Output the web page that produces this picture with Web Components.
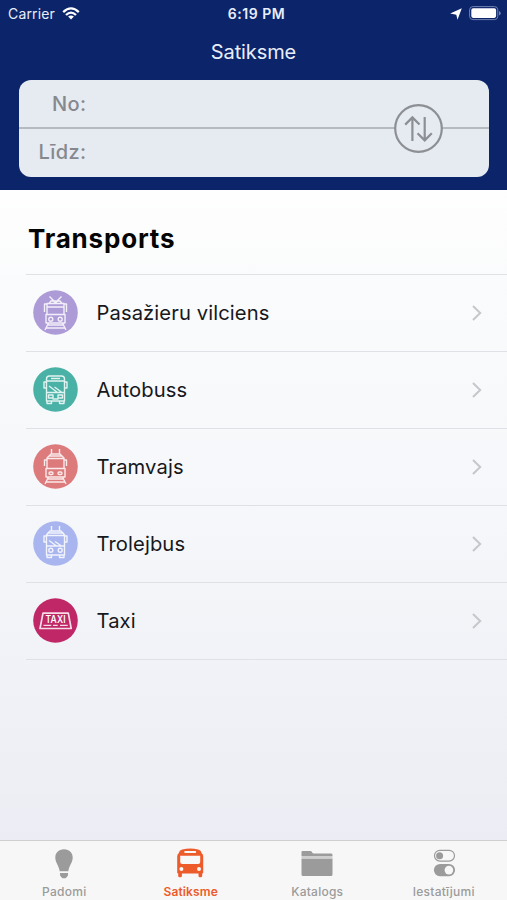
<!DOCTYPE html>
<html lang="lv">
<head>
<meta charset="utf-8">
<title>Satiksme</title>
<style>
html,body{margin:0;height:100%;overflow:hidden}
body{font-family:Inter,"Liberation Sans",sans-serif}
</style>
</head>
<body>
<transit-app></transit-app>
<script>
const define = (name, html) => {
  const t = document.createElement('template');
  t.innerHTML = html;
  customElements.define(name, class extends HTMLElement {
    constructor() {
      super();
      this.attachShadow({mode: 'open'}).append(t.content.cloneNode(true));
    }
  });
};

define('status-bar', `
<style>
:host{display:grid;grid-template-columns:1fr auto 1fr;align-items:center;height:27px;padding:0 6px 0 8px;color:#e8edfb;font-size:14px;line-height:27px;box-sizing:border-box}
div{display:flex;align-items:center}
.l{gap:7px}.r{justify-content:flex-end;gap:7px}
.c{letter-spacing:.15px}
.t{font-weight:600;font-size:14px;letter-spacing:.5px;padding-left:4px}
svg{display:block}
</style>
<div class="l"><span class="c">Carrier</span>
<svg width="18" height="13" viewBox="0 0 18 13" fill="none" stroke="#fff" stroke-width="2.3"><path d="M1.2 5.1Q9-2.3 16.8 5.1M4 8Q9 3.3 14 8"/><path d="M6.1 9.6Q9 7.2 11.9 9.6L9 12.6Z" fill="#fff" stroke="none"/></svg></div>
<span class="t">6:19 PM</span>
<div class="r"><svg width="12" height="12" viewBox="0 0 12 12" fill="#fff"><path d="M11.8.2L7.5 11.8 6.3 6.7.2 5.4Z"/></svg>
<svg width="32" height="15" viewBox="0 0 32 15"><rect x=".6" y=".6" width="28.2" height="13" rx="3.3" fill="none" stroke="#7181ae"/><rect x="2.3" y="2.3" width="24.8" height="9.6" rx="1.8" fill="#fff"/><path d="M30.2 5v4.5q1.4-.7 1.4-2.2T30.2 5" fill="#8c99bf"/></svg></div>`);

define('route-field', `
<style>
:host{display:flex;align-items:center;flex:1;box-sizing:border-box;padding:1px 0 0 19px;color:#85888d;font-size:20px;font-weight:500;letter-spacing:.4px}
:host(:last-of-type){padding:0 0 2px 19px}
span{width:48.5px;display:flex;justify-content:flex-end}
</style><span><slot></slot></span>`);

define('route-panel', `
<style>
:host{display:flex;flex-direction:column;position:relative;height:97px;background:#e6eaf1;border-radius:12px;overflow:hidden}
.line{height:1.5px;background:#b6b9be}
svg{position:absolute;left:374px;top:23px}
</style>
<route-field>No:</route-field><div class="line"></div><route-field>Līdz:</route-field>
<svg width="51" height="51" viewBox="0 0 51 51" fill="none" stroke="#8c8f94" stroke-width="2.2"><circle cx="25.5" cy="25.5" r="23.3" fill="#e6eaf1"/><path d="M19.4 38V15M12.2 21.6L19.4 14.4L26.5 21.6M31.7 14V37M24.5 30.3L31.7 37.4L38.8 30.3"/></svg>`);

define('app-header', `
<style>
:host{display:block;height:190px;background:#0c256a}
h1{margin:0;height:53px;font-weight:400;font-size:20px;line-height:51px;letter-spacing:-.1px;text-align:center;color:#e9eefb}
route-panel{margin:0 18px 0 19px}
</style>
<status-bar></status-bar><h1><slot></slot></h1><route-panel></route-panel>`);

const vehicle = {
  train: '<path d="M19 9.5L22.5 13L26 9.5M16.5 6.5L21 11M28.5 6.5L24 11M16 13.5L18 11H27L29 13.5M14 13.5H31V24.5H14ZM14 17H31M14 14H11.5V22M31 14H33.5V22M14 24.5H13V33H32V24.5H31M15.5 33L12 40M29.5 33L33 40M14.8 35H30.2M13.5 38H31.5"/><circle cx="17.8" cy="29.3" r="2"/><circle cx="27.2" cy="29.3" r="2"/>',
  bus: '<path d="M13.5 12Q13.5 9 16.5 9H28.5Q31.5 9 31.5 12V34H13.5ZM13.5 14H31.5M18 11.5H27M13.5 15H11V21H13.5M31.5 15H34V21H31.5M13.5 25.5H31.5M16 19L24.5 25.5M21.5 20L29 25.5M14 34V36.5H18.5V34M26.5 34V36.5H31V34M19.5 32H25.5"/><path d="M15.5 28H20V31H15.5ZM25 28H29.5V31H25Z"/>',
  tram: '<path d="M18.5 5V10M26.5 5V10M16 12L18 10H27L29 12M14 14L16 12H29L31 14V24.5H14ZM14 14.5H31M14 16H11.5V22M31 16H33.5V22M14 24.5H13V33H32V24.5H31M15.5 33L12 40M29.5 33L33 40M14.8 35H30.2M13.5 38H31.5"/><rect x="16" y="28" width="4" height="2.5" rx="1.2"/><rect x="25" y="28" width="4" height="2.5" rx="1.2"/>',
  trolley: '<path d="M18.5 5V10M26.5 5V10M15 12L17 10H28L30 12M13.5 14L15 12H30L31.5 14V34H13.5ZM13.5 14.5H31.5M13.5 15H11V21H13.5M31.5 15H34V21H31.5M13.5 25H31.5M16 19.5L23.5 25M22 20.5L28.5 25M14 34V36.5H18.5V34M26.5 34V36.5H31V34"/><circle cx="17.8" cy="29.2" r="2"/><circle cx="27.2" cy="29.2" r="2"/>',
  taxi: '<path stroke-width="1.7" d="M10 15.2H35.3L38.2 30.5H7Z"/><path stroke-width="1.4" d="M10.5 27.4H18.3M20 27.4H24.7M27 27.4H34.7"/><text x="22.6" y="25" text-anchor="middle" textLength="20" lengthAdjust="spacingAndGlyphs" font-family="Inter" font-size="10" font-weight="600" fill="#fff" stroke="none">TAXI</text>'
};

customElements.define('vehicle-icon', class extends HTMLElement {
  connectedCallback() {
    const kind = this.getAttribute('kind');
    this.attachShadow({mode: 'open'}).innerHTML = `
<style>:host{display:block;width:45px;height:45px;margin-top:-1px}svg{display:block}</style>
<svg width="45" height="45" viewBox="0 0 45 45"><circle cx="22.5" cy="22.5" r="22.3" fill="${this.getAttribute('tint')}"/>
<g fill="none" stroke="#fff" stroke-opacity=".84" stroke-width="1.4" stroke-linejoin="round">${vehicle[kind]}</g></svg>`;
  }
});

define('transport-row', `
<style>
:host{display:flex;align-items:center;height:77px;box-sizing:border-box;border-bottom:1px solid #dfe1e6;padding:0 24px 0 7px;font-size:20.2px;color:#17181b;letter-spacing:.1px}
.label{flex:1;padding:0 0 0 18.5px;line-height:30px}
</style>
<slot name="icon"></slot><span class="label"><slot></slot></span>
<svg width="12" height="18" viewBox="0 0 12 18" fill="none" stroke="#c6c7cb" stroke-width="2"><path d="M2 2L9.2 9L2 16"/></svg>`);

define('transport-list', `
<style>
:host{display:block;flex:1;background:linear-gradient(#fefefe 0,#fafbfc 15%,#f6f7fa 50%,#ecedf4 100%)}
h2{margin:0;padding-left:28px;height:84px;line-height:98px;font-size:26px;font-weight:700;letter-spacing:.8px;color:#050505;box-sizing:border-box}
.rows{margin-left:26px;border-top:1px solid #dfe1e6}
</style>
<h2>Transports</h2><div class="rows"><slot></slot></div>`);

const tabs = {
  bulb: '<path d="M20 4.2C14.4 4.2 11.3 8 11.3 12.5C11.3 17.5 14.7 20 15.7 26.2H24.3C25.3 20 28.7 17.5 28.7 12.5C28.7 8 25.6 4.2 20 4.2ZM16 28H24V30.2Q23 32 21.5 33.3H18.5Q17 32 16 30.2Z"/>',
  bus: '<path transform="translate(-.8 0)" fill-rule="evenodd" d="M12 4.5Q20 2.5 28 4.5Q31 5.3 31.5 8.3Q33 9 33 11.5V27.5Q33 28.5 32 28.5V31Q32 32.2 30.5 32.2H29.7Q28.3 32.2 28.3 31V28.5H11.7V31Q11.7 32.2 10.3 32.2H9.5Q8 32.2 8 31V28.5Q7 28.5 7 27.5V11.5Q7 9 8.5 8.3Q9 5.3 12 4.5ZM15 6Q14 6 14 7T15 8H25Q26 8 26 7T25 6ZM10 10.8V17Q10 19 12 19H28Q30 19 30 17V10.8ZM11.2 22A2 2 0 1 0 11.2 26A2 2 0 1 0 11.2 22ZM28.8 22A2 2 0 1 0 28.8 26A2 2 0 1 0 28.8 22Z"/>',
  folder: '<path d="M4.5 9V7Q4.5 6 5.5 6H13.5Q14.5 6 15 7.2Q15.6 8.6 17 8.6H34Q35.5 8.6 35.5 10V11H4.5ZM4.5 13.4H35.5V29.5Q35.5 31 34 31H6Q4.5 31 4.5 29.5Z"/><path fill="#cecece" d="M4.5 11H35.5V13.4H4.5Z"/>',
  toggles: '<g transform="translate(.6 0)"><rect x="9.9" y="5.3" width="20" height="10.8" rx="5.4" fill="none" stroke="currentColor" stroke-width="1.2"/><circle cx="15" cy="10.7" r="3.5"/><rect x="9.3" y="19" width="21.2" height="12.2" rx="6.1"/><circle cx="24.3" cy="25.1" r="4.3" fill="#f7f7f7"/></g>'
};

customElements.define('tab-item', class extends HTMLElement {
  connectedCallback() {
    this.attachShadow({mode: 'open'}).innerHTML = `
<style>
:host{display:flex;flex-direction:column;align-items:center;color:#9b9b9b;font-size:12px;font-weight:500;letter-spacing:.25px}
:host([active]){color:#ee5b2b;font-weight:600;letter-spacing:.15px}
svg{display:block;margin-top:4px}span{line-height:14px;margin-top:4px}
</style>
<svg width="40" height="36" viewBox="0 0 40 36" fill="currentColor">${tabs[this.getAttribute('icon')]}</svg><span><slot></slot></span>`;
  }
});

define('tab-bar', `
<style>
:host{display:grid;grid-template-columns:repeat(4,1fr);height:60px;padding-left:1px;box-sizing:border-box;background:#f7f7f7;border-top:1px solid #cfcfd2}
</style><slot></slot>`);

define('transit-app', `
<style>:host{display:flex;flex-direction:column;width:507px;height:900px;overflow:hidden}</style>
<app-header>Satiksme</app-header>
<transport-list>
<transport-row><vehicle-icon slot="icon" kind="train" tint="#ad9bd8"></vehicle-icon>Pasažieru vilciens</transport-row>
<transport-row><vehicle-icon slot="icon" kind="bus" tint="#49b1a5"></vehicle-icon>Autobuss</transport-row>
<transport-row><vehicle-icon slot="icon" kind="tram" tint="#dc7a7c"></vehicle-icon>Tramvajs</transport-row>
<transport-row><vehicle-icon slot="icon" kind="trolley" tint="#a9b5ee"></vehicle-icon>Trolejbus</transport-row>
<transport-row><vehicle-icon slot="icon" kind="taxi" tint="#c02767"></vehicle-icon>Taxi</transport-row>
</transport-list>
<tab-bar><tab-item icon="bulb">Padomi</tab-item><tab-item icon="bus" active>Satiksme</tab-item><tab-item icon="folder">Katalogs</tab-item><tab-item icon="toggles">Iestatījumi</tab-item></tab-bar>`);
</script>
</body>
</html>
